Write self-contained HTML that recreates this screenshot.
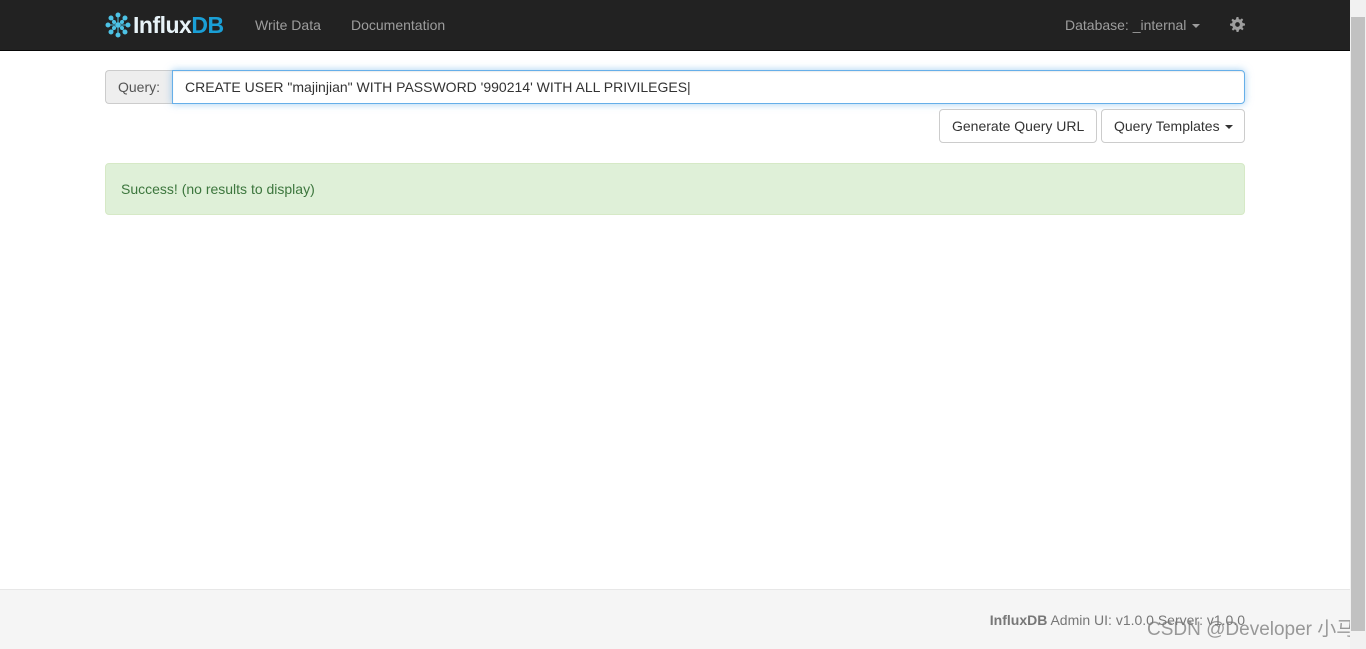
<!DOCTYPE html>
<html><head><meta charset="utf-8">
<style>
*{box-sizing:border-box;margin:0;padding:0}
body{width:1366px;height:649px;overflow:hidden;font-family:"Liberation Sans",Arial,sans-serif;font-size:14px;color:#333;background:#fff;position:relative}
.nav{position:absolute;left:0;top:0;width:1350px;height:51px;background:#222;border-bottom:1px solid #080808}
.logo{position:absolute;left:105px;top:11px;display:flex;align-items:center}
.logo span{font-size:23px;font-weight:bold;letter-spacing:-0.5px;line-height:28px}
.nl{position:absolute;top:17px;color:#9d9d9d;font-size:14px;white-space:nowrap}
.q{position:absolute;left:105px;top:70px;width:1140px;height:34px;display:flex}
.ql{width:67px;height:34px;background:#eee;border:1px solid #ccc;border-right:none;border-radius:4px 0 0 4px;color:#555;padding:8px 12px;font-size:14px;line-height:16px}
.qi{flex:1;height:34px;border:1px solid #66afe9;border-radius:0 4px 4px 0;box-shadow:inset 0 1px 1px rgba(0,0,0,.075),0 0 8px rgba(102,175,233,.6);padding:8px 12px;color:#333;line-height:16px;white-space:nowrap}
.btn{position:absolute;top:109px;height:34px;border:1px solid #ccc;border-radius:4px;background:#fff;padding:8px 12px;line-height:16px;color:#333;white-space:nowrap}
.car{display:inline-block;width:0;height:0;border-top:4px solid;border-left:4px solid transparent;border-right:4px solid transparent;vertical-align:middle;margin-left:2px}
.alert{position:absolute;left:105px;top:163px;width:1140px;height:52px;background:#dff0d8;border:1px solid #d6e9c6;border-radius:4px;color:#3c763d;padding:16px 15px;line-height:18px}
.foot{position:absolute;left:0;top:589px;width:1350px;height:60px;background:#f5f5f5;border-top:1px solid #e7e7e7}
.ft{position:absolute;right:105px;top:22px;color:#777;font-size:14px;white-space:nowrap}
.wm{position:absolute;left:1147px;top:614px;color:rgba(120,120,120,.75);font-size:19px;font-family:"Liberation Sans","Noto Sans CJK SC",sans-serif;white-space:nowrap}
.sb{position:absolute;left:1350px;top:0;width:16px;height:649px;background:#f1f1f1}
.th{position:absolute;left:1351px;top:17px;width:14px;height:614px;background:#c1c1c1}
</style></head><body>
<div class="nav">
 <div class="logo">
  <svg width="26" height="26" viewBox="0 0 26 26" fill="#4dc2e5" stroke="#4dc2e5" stroke-width="1">
   <line x1="13" y1="3" x2="13" y2="23"/><line x1="3" y1="13" x2="23" y2="13"/><line x1="6" y1="6" x2="20" y2="20"/><line x1="20" y1="6" x2="6" y2="20"/>
   <circle cx="13" cy="3" r="2"/><circle cx="13" cy="23" r="2"/><circle cx="3" cy="13" r="2"/><circle cx="23" cy="13" r="2"/>
   <circle cx="6" cy="6" r="2"/><circle cx="20" cy="20" r="2"/><circle cx="20" cy="6" r="2"/><circle cx="6" cy="20" r="2"/>
   <circle cx="13" cy="13" r="2.2"/><circle cx="9" cy="10" r="1.5"/><circle cx="17" cy="16" r="1.5"/><circle cx="17" cy="10" r="1.5"/><circle cx="9" cy="16" r="1.5"/>
  </svg>
  <span style="color:#e8f3f8;margin-left:2px">Influx</span><span style="color:#1a9fd6">DB</span>
 </div>
 <div class="nl" style="left:255px">Write Data</div>
 <div class="nl" style="left:351px">Documentation</div>
 <div class="nl" style="left:1065px">Database: _internal <span class="car" style="color:#9d9d9d"></span></div>
 <svg style="position:absolute;left:1230px;top:17px" width="15" height="15" viewBox="0 0 16 16"><path fill="#9d9d9d" d="M7 0h2l.4 2.2 1.5.6 1.8-1.3 1.4 1.4-1.3 1.8.6 1.5L16 7v2l-2.2.4-.6 1.5 1.3 1.8-1.4 1.4-1.8-1.3-1.5.6L9 16H7l-.4-2.2-1.5-.6-1.8 1.3-1.4-1.4 1.3-1.8-.6-1.5L0 9V7l2.2-.4.6-1.5L1.5 3.3l1.4-1.4 1.8 1.3 1.5-.6zM8 5.5a2.5 2.5 0 100 5 2.5 2.5 0 000-5z"/></svg>
</div>
<div class="q"><div class="ql">Query:</div><div class="qi">CREATE USER "majinjian" WITH PASSWORD '990214' WITH ALL PRIVILEGES|</div></div>
<div class="btn" style="left:939px;width:158px">Generate Query URL</div>
<div class="btn" style="left:1101px;width:144px">Query Templates <span class="car"></span></div>
<div class="alert">Success! (no results to display)</div>
<div class="foot"><div class="ft"><b>InfluxDB</b> Admin UI: v1.0.0 Server: v1.0.0</div></div>
<div class="wm">CSDN @Developer 小马</div>
<div class="sb"></div><div class="th"></div>
</body></html>
